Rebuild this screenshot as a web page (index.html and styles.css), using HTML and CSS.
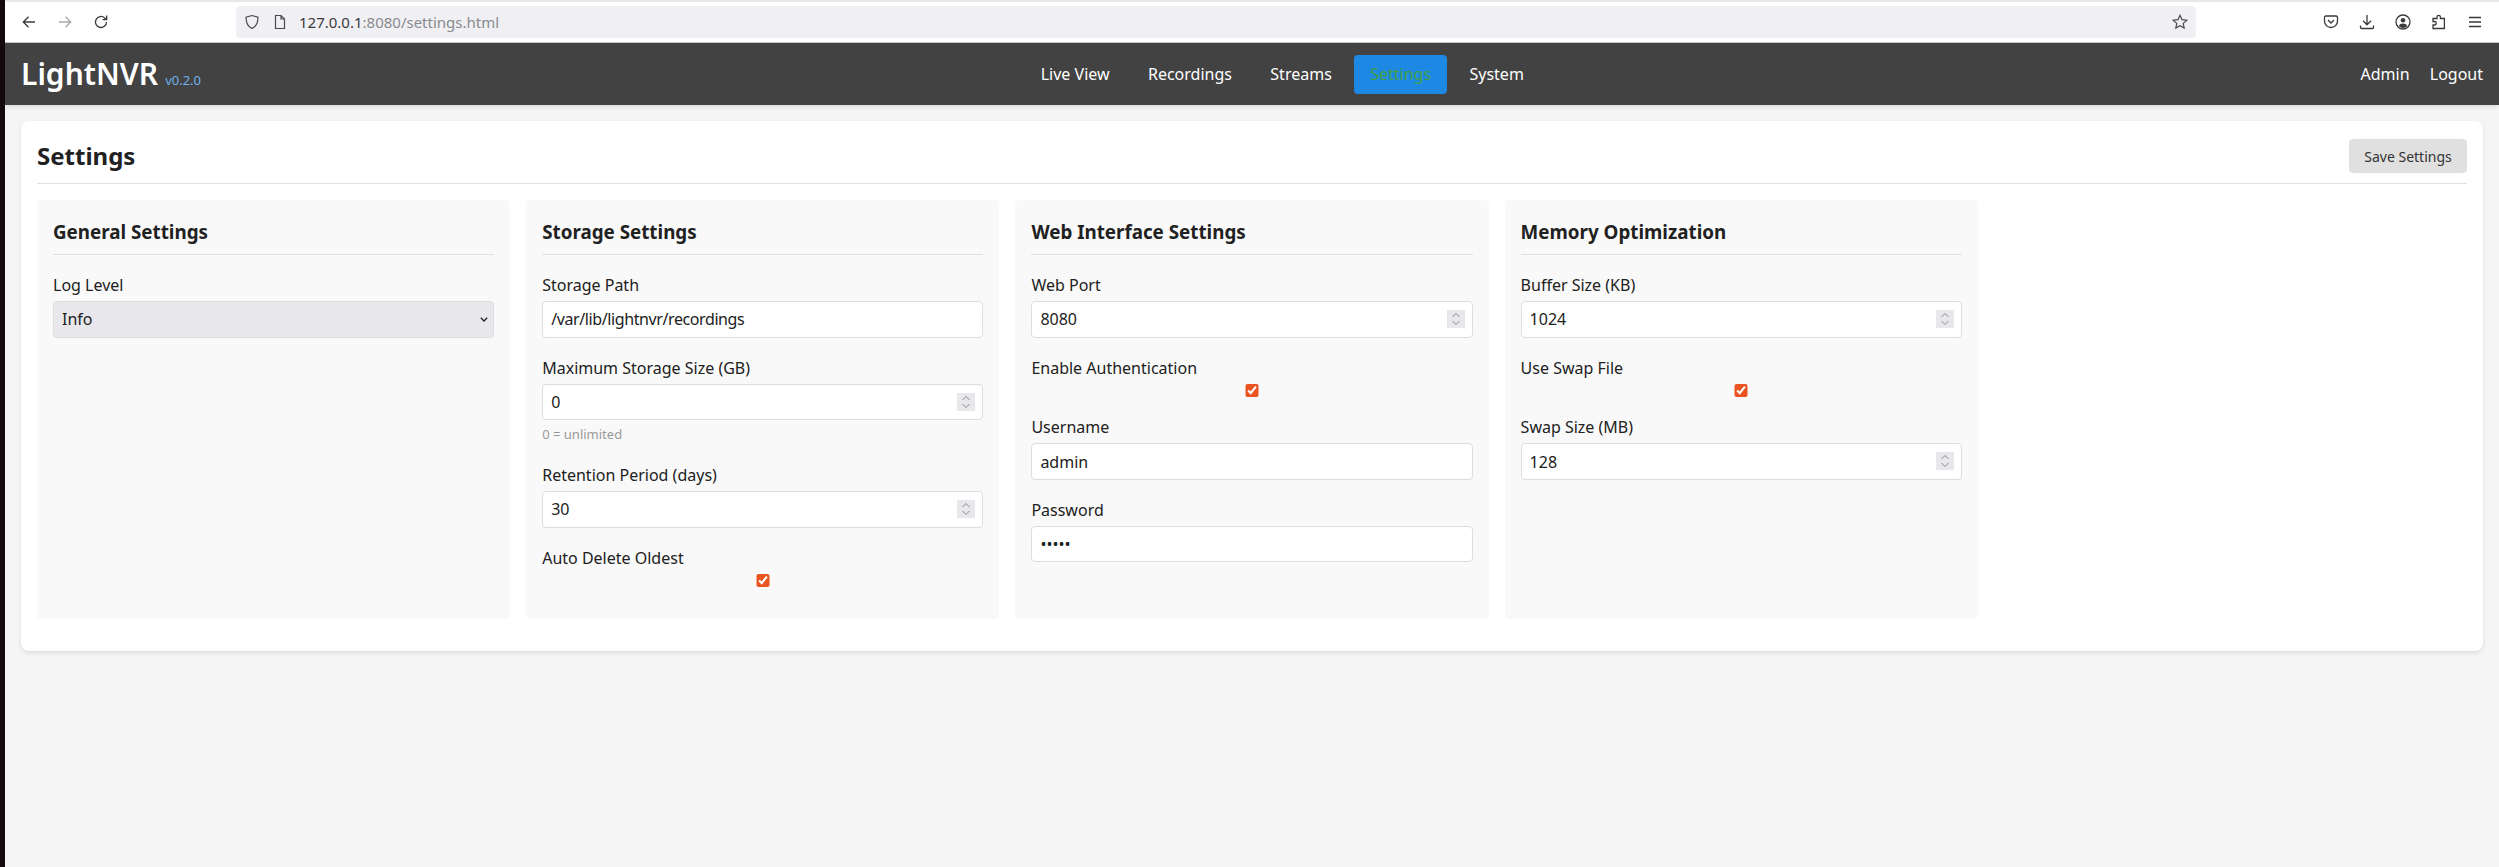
FILE: index.html
```html
<!DOCTYPE html>
<html lang="en">

<head>
  <meta charset="UTF-8" />
  <title>LightNVR - Settings</title>
  <link rel="stylesheet" href="styles.css">
</head>

<body>
  <div class="desktop-edge"></div>

  <div class="window">
    <div class="browser-bar">
      <div class="tool-slot">
        <svg class="tool-icon" viewBox="0 0 16 16"><path d="M14 8H2.500M7.500 2.800 2.300 8l5.200 5.200" /></svg>
      </div>
      <div class="tool-slot">
        <svg class="tool-icon dim" viewBox="0 0 16 16"><path d="M2 8h11.500M8.500 2.800 13.700 8l-5.200 5.200" /></svg>
      </div>
      <div class="tool-slot">
        <svg class="tool-icon" viewBox="0 0 16 16"><path d="M13.500 8a5.500 5.500 0 1 1-1.800-4.100L13.500 5.500M13.700 1.600v4h-4" /></svg>
      </div>

      <div class="url-bar">
        <svg class="url-icon" viewBox="0 0 16 16"><path d="M8 1.500 14 3.200c0 5.500-1.600 9.200-6 11.300C3.600 12.400 2 8.700 2 3.200z" /></svg>
        <svg class="url-icon page-icon" viewBox="0 0 16 16"><path d="M3.500 1.500h5.500l3.500 3.500v9.500h-9zM9 1.500v3.500h3.500" /></svg>
        <span class="url-text"><span class="url-host">127.0.0.1</span>:8080/settings.html</span>
        <svg class="url-icon star-icon" viewBox="0 0 16 16"><path d="M8 1.300 10 5.700l4.800.5-3.600 3.200 1 4.700L8 11.700l-4.200 2.400 1-4.700L1.200 6.200 6 5.700z" /></svg>
      </div>

      <div class="tool-slot">
        <svg class="tool-icon" viewBox="0 0 16 16"><path d="M2.800 2h10.400c.7 0 1.300.6 1.300 1.300V7A6.500 6.500 0 0 1 1.500 7V3.300C1.500 2.600 2.100 2 2.800 2zM5 6l3 3 3-3" /></svg>
      </div>
      <div class="tool-slot">
        <svg class="tool-icon" viewBox="0 0 16 16"><path d="M8 1v9.500M4 6.800l4 4 4-4M1.500 11.500v2c0 .6.400 1 1 1h11c.6 0 1-.4 1-1v-2" /></svg>
      </div>
      <div class="tool-slot">
        <svg class="tool-icon" viewBox="0 0 16 16"><circle cx="8" cy="8" r="7" /><circle class="solid" cx="8" cy="6.300" r="2.300" /><path class="solid" d="M3.700 12c.8-1.700 2.400-2.500 4.300-2.500s3.500.8 4.300 2.500A6 6 0 0 1 8 14a6 6 0 0 1-4.300-2z" /></svg>
      </div>
      <div class="tool-slot">
        <svg class="tool-icon" viewBox="0 0 16 16"><path d="M2 14.500V11h1.500a1.500 1.500 0 0 0 0-3.500H2V4.500h4V3a1.700 1.700 0 0 1 3.400 0v1.500h4v10z" /></svg>
      </div>
      <div class="tool-slot">
        <svg class="tool-icon" viewBox="0 0 16 16"><path d="M2 3.500h12M2 8h12M2 12.500h12" /></svg>
      </div>
    </div>

    <header class="app-header">
      <div class="logo">
        <span class="logo-name">LightNVR</span>
        <span class="logo-version">v0.2.0</span>
      </div>
      <nav class="main-nav">
        <a href="#">Live View</a>
        <a href="#">Recordings</a>
        <a href="#">Streams</a>
        <a href="#" class="active">Settings</a>
        <a href="#">System</a>
      </nav>
      <div class="user-menu">
        <span>Admin</span>
        <a href="#">Logout</a>
      </div>
    </header>

    <main class="page">
      <div class="card">
        <div class="page-title">
          <h1>Settings</h1>
          <button type="button" class="save-btn">Save Settings</button>
        </div>

        <div class="settings-grid">
          <section class="settings-section">
            <h2>General Settings</h2>
            <div class="form-group">
              <label for="log-level">Log Level</label>
              <div class="field select-field">
                <select id="log-level">
                  <option>Info</option>
                </select>
                <svg class="select-arrow" viewBox="0 0 8 5"><path d="M.8.8 4 4 7.200.8" /></svg>
              </div>
            </div>
          </section>

          <section class="settings-section">
            <h2>Storage Settings</h2>
            <div class="form-group">
              <label for="storage-path">Storage Path</label>
              <input id="storage-path" class="path-input" type="text" value="/var/lib/lightnvr/recordings">
            </div>
            <div class="form-group">
              <label for="max-size">Maximum Storage Size (GB)</label>
              <div class="field">
                <input id="max-size" type="number" value="0">
                <span class="spinner"><svg viewBox="0 0 18 18"><path d="M5.500 7 9 3.500 12.500 7M5.500 11 9 14.500 12.500 11" /></svg></span>
              </div>
              <p class="hint">0 = unlimited</p>
            </div>
            <div class="form-group">
              <label for="retention">Retention Period (days)</label>
              <div class="field">
                <input id="retention" type="number" value="30">
                <span class="spinner"><svg viewBox="0 0 18 18"><path d="M5.500 7 9 3.500 12.500 7M5.500 11 9 14.500 12.500 11" /></svg></span>
              </div>
            </div>
            <div class="form-group">
              <label for="auto-delete">Auto Delete Oldest</label>
              <input id="auto-delete" type="checkbox" checked>
            </div>
          </section>

          <section class="settings-section">
            <h2>Web Interface Settings</h2>
            <div class="form-group">
              <label for="web-port">Web Port</label>
              <div class="field">
                <input id="web-port" type="number" value="8080">
                <span class="spinner"><svg viewBox="0 0 18 18"><path d="M5.500 7 9 3.500 12.500 7M5.500 11 9 14.500 12.500 11" /></svg></span>
              </div>
            </div>
            <div class="form-group">
              <label for="enable-auth">Enable Authentication</label>
              <input id="enable-auth" type="checkbox" checked>
            </div>
            <div class="form-group">
              <label for="username">Username</label>
              <input id="username" type="text" value="admin">
            </div>
            <div class="form-group">
              <label for="password">Password</label>
              <input id="password" type="password" value="admin">
            </div>
          </section>

          <section class="settings-section">
            <h2>Memory Optimization</h2>
            <div class="form-group">
              <label for="buffer-size">Buffer Size (KB)</label>
              <div class="field">
                <input id="buffer-size" type="number" value="1024">
                <span class="spinner"><svg viewBox="0 0 18 18"><path d="M5.500 7 9 3.500 12.500 7M5.500 11 9 14.500 12.500 11" /></svg></span>
              </div>
            </div>
            <div class="form-group">
              <label for="use-swap">Use Swap File</label>
              <input id="use-swap" type="checkbox" checked>
            </div>
            <div class="form-group">
              <label for="swap-size">Swap Size (MB)</label>
              <div class="field">
                <input id="swap-size" type="number" value="128">
                <span class="spinner"><svg viewBox="0 0 18 18"><path d="M5.500 7 9 3.500 12.500 7M5.500 11 9 14.500 12.500 11" /></svg></span>
              </div>
            </div>
          </section>
        </div>
      </div>
    </main>
  </div>
</body>

</html>
```

FILE: styles.css
```css
* {
  box-sizing: border-box;
}

body {
  margin: 0;
  min-height: 100vh;
  display: flex;
  font-family: "Noto Sans", sans-serif;
  font-size: 16px;
  line-height: 1.6;
  color: #212121;
  background: #f5f5f5;
}

.desktop-edge {
  width: 5px;
  background: #14090f;
}

.window {
  flex: 1;
  min-width: 0;
}

/* browser toolbar */
.browser-bar {
  height: 43px;
  padding: 0 6px;
  display: flex;
  align-items: center;
  background: #fff;
  border-top: 2px solid #e8e8ea;
  border-bottom: 1px solid #c8c8c8;
}

.tool-slot {
  width: 36px;
  height: 32px;
  display: flex;
  align-items: center;
  justify-content: center;
}

.tool-icon {
  width: 16px;
  height: 16px;
  fill: none;
  stroke: #3a3a3c;
  stroke-width: 1.3;
}

.tool-icon.dim {
  stroke: #a8a8aa;
}

.tool-icon .solid {
  fill: #3a3a3c;
  stroke: none;
}

.url-bar {
  flex: 1;
  height: 32px;
  margin: 0 117px;
  padding: 0 8px;
  display: flex;
  align-items: center;
  background: #f0f0f4;
  border-radius: 4px;
  font-size: 15px;
  color: #8a8a8e;
}

.url-icon {
  width: 16px;
  height: 16px;
  fill: none;
  stroke: #4a4a4c;
  stroke-width: 1.2;
}

.page-icon {
  margin-left: 12px;
}

.url-text {
  margin-left: 11px;
  flex: 1;
}

.url-host {
  color: #3a3a3c;
}

/* app header */
.app-header {
  height: 62px;
  padding: 0 16px;
  display: flex;
  align-items: center;
  justify-content: space-between;
  color: #fff;
  background: #424242;
  box-shadow: 0 2px 4px rgba(0, 0, 0, 0.1);
}

.logo-name {
  font-size: 30px;
  font-weight: 600;
}

.logo-version {
  margin-left: 3px;
  font-size: 13px;
  color: #6fb0e8;
}

.main-nav {
  margin: 1px 0 0 3px;
  display: flex;
  gap: 6.4px;
}

.main-nav a {
  padding: 7.4px 16px 6px;
  border-radius: 4px;
  color: #fff;
  text-decoration: none;
}

.main-nav a.active {
  background: #1e88e5;
  color: #43a047;
}

.user-menu {
  margin-top: 1px;
}

.user-menu a {
  margin-left: 16px;
  color: #fff;
  text-decoration: none;
}

/* settings card */
.page {
  padding: 16px;
}

.card {
  padding: 16px;
  background: #fff;
  border-radius: 8px;
  box-shadow: 0 2px 4px rgba(0, 0, 0, 0.1);
}

.page-title {
  padding-bottom: 8px;
  margin-bottom: 16px;
  display: flex;
  align-items: center;
  justify-content: space-between;
  border-bottom: 1px solid #e0e0e0;
}

.page-title h1 {
  margin: 0;
  font-size: 24px;
  font-weight: 700;
}

.save-btn {
  width: 118px;
  height: 34px;
  padding: 0;
  border: none;
  border-radius: 4px;
  background: #e0e0e0;
  color: #333;
  font-family: inherit;
  font-size: 14px;
}

.settings-grid {
  margin-bottom: 16px;
  display: grid;
  grid-template-columns: repeat(5, 1fr);
  gap: 16px;
}

.settings-section {
  padding: 16px;
  background: #f9f9f9;
  border-radius: 4px;
}

.settings-section h2 {
  margin: 0 0 16px;
  padding: 1px 0 6.6px;
  border-bottom: 1px solid #e0e0e0;
  font-size: 18.8px;
  font-weight: 700;
}

.form-group {
  margin-bottom: 16px;
}

.form-group label {
  display: block;
  padding-top: 2px;
  margin-bottom: 2.6px;
}

.form-group input[type="text"],
.form-group input[type="number"],
.form-group input[type="password"],
.form-group select {
  display: block;
  width: 100%;
  height: 36.4px;
  padding: 0 8px;
  border: 1px solid #ddd;
  border-radius: 4px;
  background: #fff;
  color: #212121;
  font-family: inherit;
  font-size: 16px;
}

.form-group input[type="number"] {
  appearance: textfield;
}

.form-group .path-input {
  letter-spacing: -0.4px;
}

.form-group select {
  appearance: none;
  background: #e8e8ec;
}

.form-group input[type="checkbox"] {
  display: block;
  width: 14px;
  height: 13.33px;
  margin: 0 auto;
  accent-color: #e95420;
}

.field {
  position: relative;
}

.spinner {
  position: absolute;
  top: 9px;
  right: 8px;
  width: 18px;
  height: 18px;
  background: #e8e8ec;
}

.spinner svg {
  display: block;
  fill: none;
  stroke: #8a8a8e;
  stroke-width: 1;
}

.select-arrow {
  position: absolute;
  top: 16px;
  right: 6px;
  width: 8px;
  height: 5px;
  fill: none;
  stroke: #212121;
  stroke-width: 1.3;
}

.hint {
  margin: 4px 0 0;
  font-size: 13px;
  color: #999;
}
```
